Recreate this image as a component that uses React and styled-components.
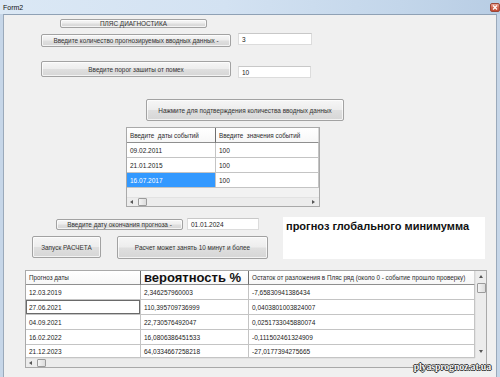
import React from "react";
import styled, { createGlobalStyle } from "styled-components";

const Global = createGlobalStyle`
  html, body { margin: 0; padding: 0; width: 500px; height: 377px; overflow: hidden; }
  body { font-family: "Liberation Sans", Arial, sans-serif; color: #222; }
  * { box-sizing: border-box; }
`;

const Window = styled.div`
  position: relative;
  width: 500px;
  height: 377px;
  display: flex;
  flex-direction: column;
  background: #c6d6e8;
`;

const TitleBar = styled.div`
  height: 14px;
  display: flex;
  align-items: center;
  justify-content: space-between;
  padding-left: 3px;
  background: linear-gradient(to right, #dbe8f5 0%, #d3e2f2 45%, #c3d6ea 80%, #b8cde4 100%);
  font-size: 7px;
  color: #111;
`;

const CloseBox = styled.div`
  width: 10px;
  height: 9px;
  margin-top: 1px;
  border-radius: 2px;
  border: 1px solid #9a4636;
  background: linear-gradient(#e9a597, #d0604b 55%, #c24a33);
  display: flex;
  align-items: center;
  justify-content: center;
`;

const Frame = styled.div`
  flex: 1;
  display: flex;
  padding: 0 3px;
  background: #c6d6e8;
`;

const Client = styled.div`
  flex: 1;
  display: flex;
  flex-direction: column;
  background: #f0f0f0;
  border-top: 1px solid #8fa1b5;
  border-left: 1px solid #9aa9ba;
  border-right: 1px solid #9aa9ba;
`;

const Row = styled.div`
  display: flex;
  align-items: flex-start;
  margin-top: ${(p) => p.$mt || 0}px;
  padding-left: ${(p) => p.$pl || 0}px;
`;

const Column = styled.div`
  display: flex;
  flex-direction: column;
`;

const Button = styled.div`
  width: ${(p) => p.$w}px;
  height: ${(p) => p.$h}px;
  margin-left: ${(p) => p.$ml || 0}px;
  margin-top: ${(p) => p.$mt || 0}px;
  border: 1px solid #a2a2a2;
  border-radius: 2px;
  background: linear-gradient(#f6f6f6 0%, #ededed 48%, #dfdfdf 52%, #d6d6d6 100%);
  box-shadow: inset 0 0 0 1px rgba(255, 255, 255, 0.7);
  display: flex;
  align-items: center;
  justify-content: center;
  font-size: 6.4px;
  color: #333;
  white-space: nowrap;
`;

const Input = styled.div`
  width: ${(p) => p.$w}px;
  height: 12px;
  margin-left: ${(p) => p.$ml || 0}px;
  margin-top: ${(p) => p.$mt || 0}px;
  background: #fff;
  border: 1px solid #dcdcdc;
  border-top-color: #c8c8c8;
  display: flex;
  align-items: center;
  padding-left: 3px;
  font-size: 6.5px;
  color: #222;
`;

const LabelBox = styled.div`
  width: 202px;
  height: 42px;
  margin-left: 15px;
  background: #fff;
  padding: 3px 0 0 3px;
  font-size: 11px;
  font-weight: bold;
  color: #111;
  white-space: nowrap;
`;

const Grid = styled.div`
  width: ${(p) => p.$w}px;
  margin-left: ${(p) => p.$ml || 0}px;
  border: 1px solid #a9a9a9;
  background: #f2f2f2;
  display: flex;
  flex-direction: column;
`;

const GridBody = styled.div`
  display: flex;
`;

const Table = styled.div`
  flex: 1;
  display: grid;
  grid-template-columns: ${(p) => p.$cols};
  align-content: start;
`;

const HeadCell = styled.div`
  height: ${(p) => p.$h}px;
  background: linear-gradient(#ffffff, #f7f7f7);
  border-bottom: 1px solid #8f8f8f;
  border-right: 1px solid ${(p) => (p.$last ? "#d6d6d6" : "#6f6f6f")};
  display: flex;
  align-items: center;
  padding-left: 3px;
  font-size: ${(p) => (p.$big ? "13px" : "6.3px")};
  font-weight: ${(p) => (p.$big ? "bold" : "normal")};
  color: ${(p) => (p.$big ? "#111" : "#2a2a2a")};
  white-space: nowrap;
  overflow: hidden;
`;

const Cell = styled.div`
  height: ${(p) => p.$h || 15}px;
  background: ${(p) => (p.$sel ? "#3399ff" : "#fff")};
  color: ${(p) => (p.$sel ? "#fff" : "#222")};
  border-bottom: 1px solid #c4c4c4;
  border-right: 1px solid #c4c4c4;
  box-shadow: ${(p) => (p.$focus ? "inset 0 0 0 1px #6a6a6a" : "none")};
  display: flex;
  align-items: center;
  padding-left: 3px;
  font-size: 6.5px;
  white-space: nowrap;
  overflow: hidden;
`;

const Spacer = styled.div`
  height: ${(p) => p.$h}px;
`;

const HScroll = styled.div`
  height: 9px;
  flex: 1;
  display: flex;
  align-items: center;
  background: #ececec;
  border-top: 1px solid #e2e2e2;
  padding: 0 2px;
`;

const Thumb = styled.div`
  width: ${(p) => p.$w}px;
  height: ${(p) => p.$h}px;
  margin-left: ${(p) => p.$ml || 0}px;
  margin-top: ${(p) => p.$mt || 0}px;
  border: 1px solid #9b9b9b;
  border-radius: 1px;
  background: linear-gradient(to right, #f4f4f4, #dcdcdc);
`;

const Grow = styled.div`
  flex: 1;
`;

const VScroll = styled.div`
  width: 11px;
  display: flex;
  flex-direction: column;
  align-items: center;
  background: #ececec;
  border-left: 1px solid #e2e2e2;
  padding: 3px 0;
`;

const ScrollRow = styled.div`
  display: flex;
`;

const Corner = styled.div`
  width: 11px;
  height: 9px;
  background: #ececec;
`;

const Watermark = styled.div`
  position: absolute;
  right: 9px;
  bottom: 5px;
  font-family: "Liberation Serif", "Times New Roman", serif;
  font-weight: bold;
  font-size: 10px;
  letter-spacing: -0.2px;
  color: #f4f4f4;
  text-shadow: -1px 0 #333, 1px 0 #333, 0 -1px #333, 0 1px #333;
`;

const Arrow = ({ dir }) => {
  const pts = {
    left: "4,1 1,3 4,5",
    right: "1,1 4,3 1,5",
    up: "1,4 3,1 5,4",
    down: "1,1 3,4 5,1",
  }[dir];
  return (
    <svg width="6" height="6" viewBox="0 0 6 6">
      <polygon points={pts} fill="#555" />
    </svg>
  );
};

const grid2Rows = [
  ["12.03.2019", "2,346257960003", "-7,65830941386434"],
  ["27.06.2021", "110,395709736999", "0,0403801003824007"],
  ["04.09.2021", "22,730576492047", "0,0251733045880074"],
  ["16.02.2022", "16,0806386451533", "-0,111502461324909"],
  ["21.12.2023", "64,0334667258218", "-27,0177394275665"],
];

const grid1Rows = [
  ["09.02.2011", "100"],
  ["21.01.2015", "100"],
  ["16.07.2017", "100"],
];

export default function App() {
  return (
    <>
      <Global />
      <Window>
        <TitleBar>
          <span>Form2</span>
          <CloseBox>
            <svg width="6" height="5" viewBox="0 0 6 5">
              <path d="M1 0.5 L5 4.5 M5 0.5 L1 4.5" stroke="#fff" strokeWidth="1.2" />
            </svg>
          </CloseBox>
        </TitleBar>
        <Frame>
          <Client>
            <Row $mt={4} $pl={56}>
              <Button $w={147} $h={9}>ПЛЯС ДИАГНОСТИКА</Button>
            </Row>
            <Row $mt={5} $pl={37}>
              <Button $w={190} $h={13} $mt={1}>
                Введите количество прогнозируемых вводных данных -
              </Button>
              <Input $w={74} $ml={7}>3</Input>
            </Row>
            <Row $mt={14} $pl={37}>
              <Button $w={190} $h={16}>Введите порог зашиты от помех</Button>
              <Input $w={73} $ml={7} $mt={5}>10</Input>
            </Row>
            <Row $mt={21} $pl={142}>
              <Button $w={198} $h={22}>
                Нажмите для подтверждения количества вводных данных
              </Button>
            </Row>
            <Row $mt={6} $pl={122}>
              <Grid $w={194}>
                <Table $cols="89px 1fr">
                  <HeadCell $h={15}>Введите&nbsp; даты событий</HeadCell>
                  <HeadCell $h={15} $last>
                    Введите&nbsp; значения событий
                  </HeadCell>
                  {grid1Rows.map((r, i) => (
                    <React.Fragment key={i}>
                      <Cell $sel={i === 2}>{r[0]}</Cell>
                      <Cell>{r[1]}</Cell>
                    </React.Fragment>
                  ))}
                </Table>
                <Spacer $h={9} />
                <ScrollRow>
                  <HScroll>
                    <Arrow dir="left" />
                    <Thumb $w={9} $h={8} $ml={3} />
                    <Grow />
                    <Arrow dir="right" />
                  </HScroll>
                </ScrollRow>
              </Grid>
            </Row>
            <Row $mt={10}>
              <Column>
                <Row $pl={52}>
                  <Button $w={127} $h={11} $mt={2}>
                    Введите дату окончания прогноза -
                  </Button>
                  <Input $w={72} $ml={4} $mt={1}>01.01.2024</Input>
                </Row>
                <Row $mt={6} $pl={28}>
                  <Button $w={69} $h={22}>Запуск РАСЧЕТА</Button>
                  <Button $w={151} $h={23} $ml={16}>
                    Расчет может занять 10 минут и более
                  </Button>
                </Row>
              </Column>
              <LabelBox>прогноз глобального минимумма</LabelBox>
            </Row>
            <Row $mt={11} $pl={21}>
              <Grid $w={462}>
                <GridBody>
                  <Table $cols="115px 108px 1fr">
                    <HeadCell $h={14}>Прогноз даты</HeadCell>
                    <HeadCell $h={14} $big>вероятность %</HeadCell>
                    <HeadCell $h={14} $last>
                      Остаток от разложения в Пляс ряд (около 0 - событие прошло проверку)
                    </HeadCell>
                    {grid2Rows.map((r, i) => (
                      <React.Fragment key={i}>
                        <Cell $h={i === 4 ? 13 : 15} $focus={i === 1}>{r[0]}</Cell>
                        <Cell $h={i === 4 ? 13 : 15}>{r[1]}</Cell>
                        <Cell $h={i === 4 ? 13 : 15}>{r[2]}</Cell>
                      </React.Fragment>
                    ))}
                  </Table>
                  <VScroll>
                    <Arrow dir="up" />
                    <Thumb $w={9} $h={10} $mt={3} />
                    <Grow />
                    <Arrow dir="down" />
                  </VScroll>
                </GridBody>
                <ScrollRow>
                  <HScroll>
                    <Arrow dir="left" />
                    <Thumb $w={9} $h={8} $ml={3} />
                    <Grow />
                  </HScroll>
                  <Corner />
                </ScrollRow>
              </Grid>
            </Row>
          </Client>
        </Frame>
        <Watermark>plyasprognoz.at.ua</Watermark>
      </Window>
    </>
  );
}
